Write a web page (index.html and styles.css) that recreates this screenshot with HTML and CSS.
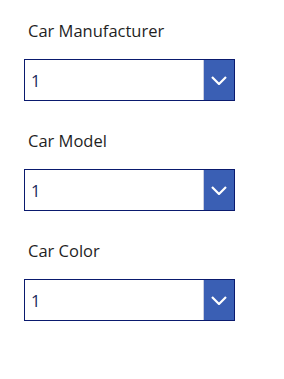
FILE: index.html
```html
<!DOCTYPE html>
<html lang="en">
<head>
  <meta charset="UTF-8">
  <meta name="viewport" content="width=device-width, initial-scale=1.0">
  <title>Car Picker</title>
  <link rel="stylesheet" href="styles.css">
</head>
<body>
  <div class="form">
    <!-- Manufacturer -->
    <div class="field">
      <div class="label">Car Manufacturer</div>
      <div class="dropdown">
        <span class="value">1</span>
        <span class="chevron">
          <svg width="16" height="9" viewBox="0 0 16 9"><path d="M1 1 L8 8 L15 1" fill="none" stroke="#fff" stroke-width="2.2"/></svg>
        </span>
      </div>
    </div>

    <!-- Model -->
    <div class="field">
      <div class="label">Car Model</div>
      <div class="dropdown">
        <span class="value">1</span>
        <span class="chevron">
          <svg width="16" height="9" viewBox="0 0 16 9"><path d="M1 1 L8 8 L15 1" fill="none" stroke="#fff" stroke-width="2.2"/></svg>
        </span>
      </div>
    </div>

    <!-- Color -->
    <div class="field">
      <div class="label">Car Color</div>
      <div class="dropdown">
        <span class="value">1</span>
        <span class="chevron">
          <svg width="16" height="9" viewBox="0 0 16 9"><path d="M1 1 L8 8 L15 1" fill="none" stroke="#fff" stroke-width="2.2"/></svg>
        </span>
      </div>
    </div>
  </div>
</body>
</html>
```

FILE: styles.css
```css
body {
  margin: 0;
  background: #fff;
  font-family: "Open Sans", "Noto Sans", sans-serif;
  color: #1f1f1f;
}

.form {
  padding: 20px 0 0 24px;
  width: 211px;
}

.field {
  margin-bottom: 29px;
}

.label {
  font-size: 16.5px;
  line-height: 22px;
  margin: 0 0 17px 4px;
}

.dropdown {
  display: flex;
  height: 42px;
  box-sizing: border-box;
  border: 1px solid #0a1a6e;
  background: #fff;
}

.value {
  flex: 1;
  display: flex;
  align-items: center;
  padding-left: 6px;
  font-size: 16.5px;
  color: #1b2a5c;
}

.chevron {
  width: 30px;
  display: flex;
  align-items: center;
  justify-content: center;
  background: #3a5fb4;
  border-left: 1px solid #c7cde0;
}
```
